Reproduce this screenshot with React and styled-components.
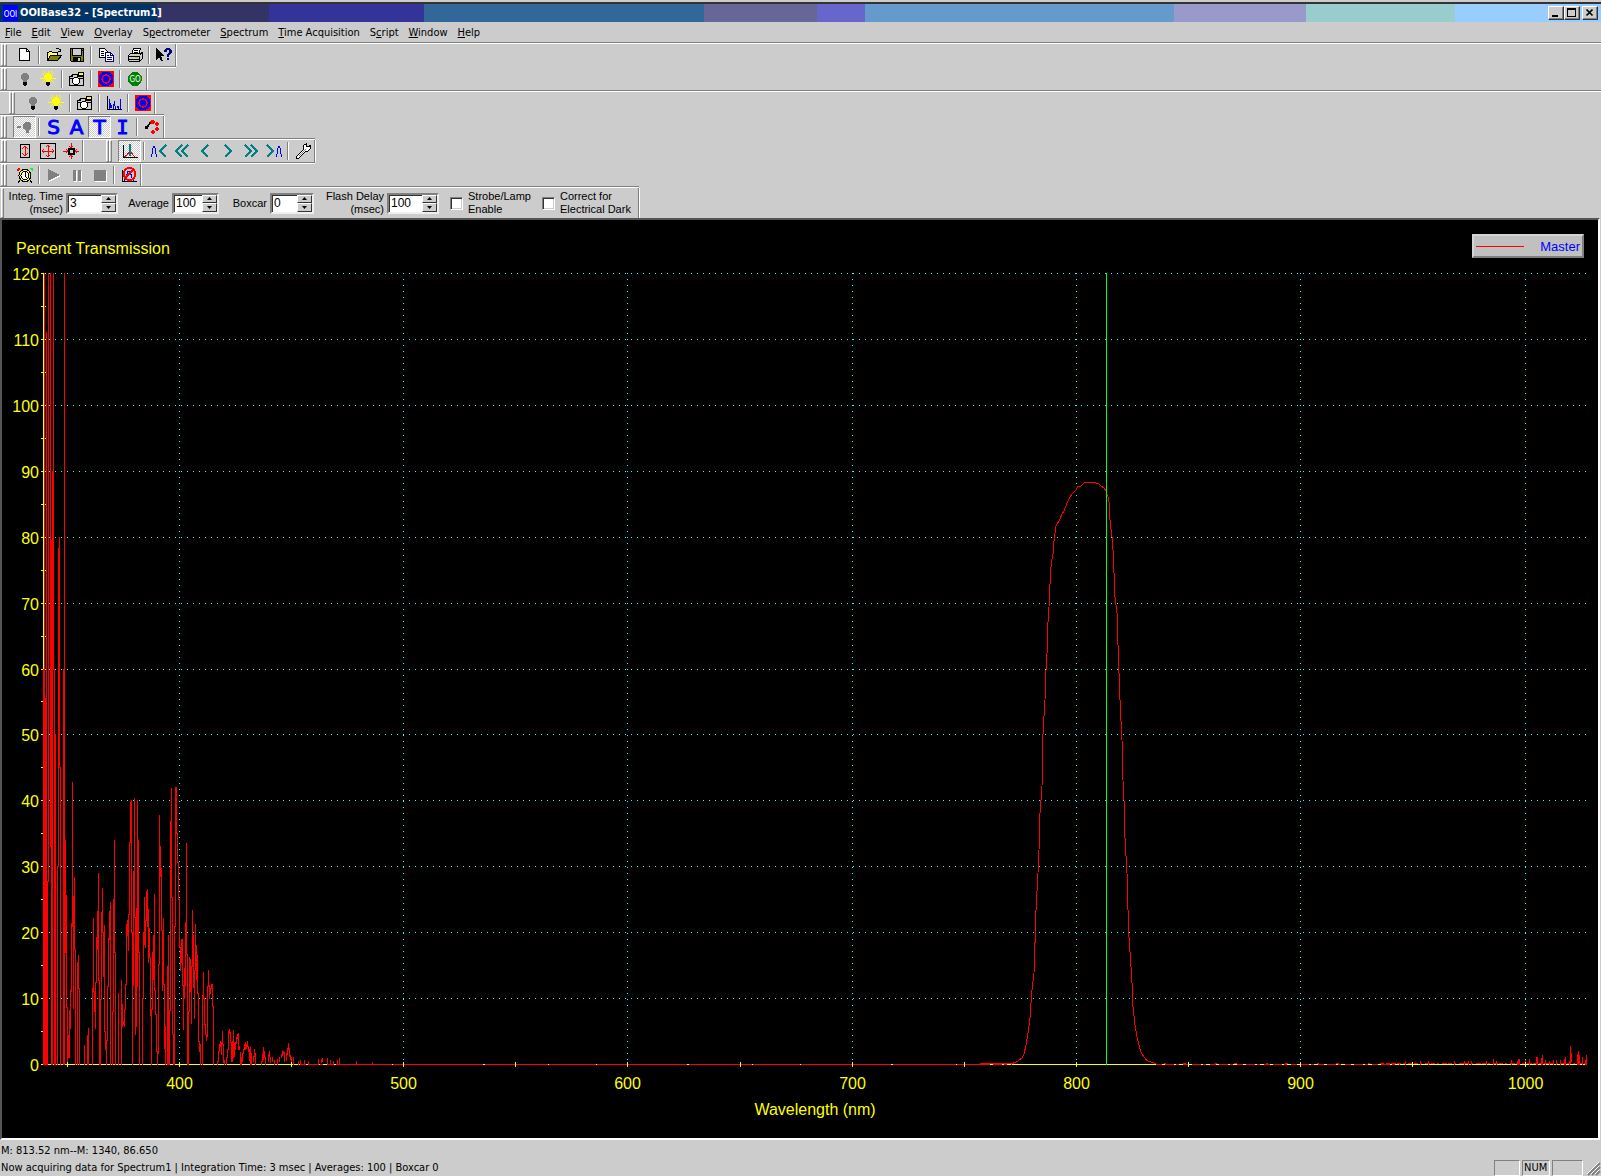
import React from "react";
import styled, { createGlobalStyle, css } from "styled-components";

const GlobalStyle = createGlobalStyle`
  *,
  *::before,
  *::after {
    box-sizing: border-box;
  }
  body {
    margin: 0;
    background: #ccc;
  }
  button, input {
    font: inherit;
    color: inherit;
    border-radius: 0;
  }
`;

const Window = styled.div`
  min-height: 100vh;
  display: flex;
  flex-direction: column;
  padding-top: 2px;
  background: #ccc;
  color: #000;
  font-family: "DejaVu Sans Condensed", "DejaVu Sans", sans-serif;
  font-size: 11px;
  line-height: 14px;
`;

const TitleBar = styled.header`
  display: flex;
  align-items: center;
  height: 20px;
  padding: 0 3px;
  border-top: 2px solid #333;
  background: linear-gradient(
    90deg,
    #036 0 9.8%,
    #336 0 16.8%,
    #339 0 26.5%,
    #369 0 44%,
    #669 0 51%,
    #66c 0 54%,
    #69c 0 73.3%,
    #99c 0 81.6%,
    #9cc 0 90.9%,
    #9cf 0
  );
`;

const Title = styled.h1`
  flex: 1;
  margin: 0 0 0 2px;
  color: #fff;
  font-size: 11px;
  line-height: 14px;
`;

const raised = css`
  border: 1px solid;
  border-color: #fff #333 #333 #fff;
  background: #ccc;
`;

const sunken = css`
  border: 1px solid;
  border-color: #808080 #fff #fff #808080;
`;

const CaptionButton = styled.button`
  ${raised}
  width: 16px;
  height: 14px;
  padding: 0;
  margin-left: ${(props) => (props.$apart ? "2px" : "0")};
  box-shadow: inset -1px -1px #808080;
  svg {
    display: block;
  }
`;

const MenuBar = styled.nav`
  display: flex;
  align-items: center;
  gap: 10px;
  height: 20px;
  padding: 1px 0 0 5px;
`;

const MenuButton = styled.button`
  padding: 0;
  border: 0;
  background: none;
`;

const Dock = styled.div`
  display: flex;
  flex-direction: column;
  gap: 2px;
  padding-top: 1px;
  border-top: 1px solid #808080;
  box-shadow: inset 0 1px #fff;
`;

const DockRow = styled.div`
  display: flex;
`;

const Toolbar = styled.div`
  display: flex;
  align-items: center;
  height: ${(props) => (props.$tall ? "30px" : "22px")};
  padding-left: ${(props) => props.$indent || 0}px;
  border-right: 1px solid #808080;
  box-shadow: 1px 0 #fff, 0 1px #808080, 0 2px #fff, 0 -1px #fff, 0 -2px #808080;
`;

const Grip = styled.span`
  align-self: stretch;
  display: flex;
  margin: 0 ${(props) => (props.$single ? 3 : 6)}px 0 1px;
  &::before,
  &::after {
    content: "";
    width: 3px;
    border: 1px solid;
    border-color: #fff #808080 #808080 #fff;
  }
  &::after {
    display: ${(props) => (props.$single ? "none" : "block")};
  }
`;

const Separator = styled.span`
  width: 6px;
  height: 18px;
  display: flex;
  justify-content: center;
  &::before {
    content: "";
    width: 2px;
    border-left: 1px solid #808080;
    border-right: 1px solid #fff;
  }
`;

const ToolButton = styled.button`
  display: flex;
  align-items: center;
  justify-content: center;
  width: 23px;
  height: 22px;
  padding: 0;
  border: 1px solid transparent;
  background: none;
  ${(props) =>
    props.$pressed &&
    css`
      border-color: #808080 #fff #fff #808080;
      background: repeating-conic-gradient(#fff 0 25%, #ccc 0 50%) 0 0 / 2px 2px;
    `}
`;

const Letter = styled.span`
  color: #00f;
  font-family: ${(props) => (props.$serif ? '"DejaVu Sans Mono"' : '"DejaVu Sans"')}, sans-serif;
  font-size: 20px;
  line-height: 20px;
  -webkit-text-stroke: 1px #00f;
`;

const Settings = styled.form`
  display: flex;
  align-items: center;
  padding-right: 3px;
  font-family: "Liberation Sans", Arial, sans-serif;
  font-size: 11px;
  line-height: 13px;
  white-space: nowrap;
`;

const SettingLabel = styled.label`
  width: ${(props) => props.$width}px;
  text-align: right;
`;

const SpinBox = styled.span`
  display: flex;
  width: ${(props) => props.$width}px;
  height: 21px;
  margin: 0 4px 0 3px;
  border: 2px solid;
  border-color: #808080 #eee #eee #808080;
  background: #fff;
  box-shadow: inset 1px 1px #333;
`;

const SpinInput = styled.input`
  flex: 1;
  min-width: 0;
  padding: 0 0 0 2px;
  border: 0;
  background: none;
  font-size: 12px;
  outline: 0;
`;

const SpinButtons = styled.span`
  display: flex;
  flex-direction: column;
  width: 15px;
`;

const SpinButton = styled.button`
  ${raised}
  flex: 1;
  display: flex;
  align-items: center;
  justify-content: center;
  padding: 0;
`;

const CheckLabel = styled.label`
  display: flex;
  align-items: center;
  gap: 5px;
  margin: 0 4px 0 7px;
`;

const CheckBox = styled.input`
  appearance: none;
  width: 13px;
  height: 13px;
  margin: 0;
  border: 1px solid;
  border-color: #808080 #fff #fff #808080;
  background: #fff;
  box-shadow: inset 1px 1px #333, inset -1px -1px #ccc;
`;

const ChartFrame = styled.main`
  position: relative;
  margin-right: 1px;
  border: 2px solid;
  border-color: #555 #fff #fff #555;
  background: #000;
`;

const Chart = styled.svg`
  display: block;
  width: 100%;
  height: auto;
  font-family: "Liberation Sans", Arial, sans-serif;
  font-size: 16px;
`;

const Legend = styled.div`
  position: absolute;
  top: 14px;
  right: 14px;
  display: flex;
  align-items: center;
  gap: 16px;
  height: 24px;
  padding: 1px 2px 0;
  border: 2px solid;
  border-color: #d4d4d4 #808080 #808080 #d4d4d4;
  background: #c0c0c0;
  color: #00f;
  font-family: "Liberation Sans", Arial, sans-serif;
  font-size: 13px;
  &::before {
    content: "";
    width: 48px;
    height: 1px;
    background: #f00;
  }
`;

const StatusArea = styled.footer`
  display: flex;
  flex-direction: column;
  justify-content: space-between;
  height: 36px;
  padding-top: 3px;
`;

const StatusLine = styled.div`
  display: flex;
  align-items: center;
  height: 16px;
  padding-left: 1px;
  gap: 2px;
`;

const StatusText = styled.span`
  flex: 1;
`;

const Pane = styled.span`
  ${sunken}
  width: ${(props) => props.$width}px;
  height: 16px;
  padding-left: 1px;
`;

const Icon = ({ children, size = 16 }) => (
  <svg width={size} height={size} viewBox="0 0 16 16" fill="none" shapeRendering="crispEdges" aria-hidden="true">
    {children}
  </svg>
);

const BulbShape = ({ color }) => (
  <>
    <path d="M6 2h4v1h1v1h1v4h-1v1h-1v2H6V9H5V8H4V4h1V3h1z" fill={color} />
    <path d="M6 11h4v3H9v1H7v-1H6z" fill="#000" />
  </>
);

const TargetShape = () => (
  <>
    <path d="M0 0h16v16H0z" fill="#f00" />
    <circle cx="8" cy="8" r="7.5" fill="#00f" />
    <circle cx="8" cy="8" r="4" stroke="#f00" strokeWidth="1.5" />
  </>
);

const icons = {
  new: (
    <>
      <path d="M2.500 1.500h7l3 3v9h-10z" fill="#fff" stroke="#000" />
      <path d="M9.500 1.500v3h3" stroke="#000" />
    </>
  ),
  open: (
    <>
      <path d="M1.500 12.500v-7h1l1-1h2l1 1h5v3" fill="#ff6" stroke="#000" />
      <path d="M1.500 13.500l3-5h11l-4 5z" fill="#808000" stroke="#000" />
      <path d="M9.500 2.500l1-1h2l2 2m0-2v3h-3" stroke="#000" />
    </>
  ),
  save: (
    <>
      <path d="M1.500 1.500h13v13h-12l-1-1z" fill="#808000" stroke="#000" />
      <path d="M4 2h8v6H4z" fill="#ccc" />
      <path d="M3.500 2v6.500h9V2M13 3h1" stroke="#000" />
      <path d="M4 10h8v4H4z" fill="#000" />
      <path d="M9 11h2v3H9z" fill="#ccc" />
    </>
  ),
  copy: (
    <>
      <path d="M1.500 1.500h5l3 3v6h-8z" fill="#fff" stroke="#000" />
      <path d="M3 4.500h3M3 6.500h3M3 8.500h3" stroke="#000" />
      <path d="M7.500 5.500h5l3 3v6h-8z" fill="#fff" stroke="#000080" />
      <path d="M12.500 5.500v3h3M9 8.500h2M9 10.500h5M9 12.500h5" stroke="#000080" />
    </>
  ),
  print: (
    <>
      <path d="M4.500 7.500l2-6h7l-2 6z" fill="#fff" stroke="#000" />
      <path d="M7 3.500h4M7 5.500h4" stroke="#000" />
      <path d="M1.500 8.500l2-2h10l2-1v6l-3 3h-10l-1-1z" fill="#ccc" stroke="#000" />
      <path d="M1 9.500h11M2 12.500h10M12.500 9v5M13 8l2-2" stroke="#000" />
      <path d="M8 10.500h3" stroke="#cc0" />
    </>
  ),
  help: (
    <>
      <path d="M0 1l8 8H5l2 5H5L3 10l-3 3z" fill="#000" />
      <path d="M8 5V3h1V2h1V1h4v1h1v1h1v3h-1v1h-1v1h-1v2h-2V7h1V6h1V3h-2v2zm3 6h2v2h-2z" fill="#000080" />
    </>
  ),
  bulbOff: <BulbShape color="#808080" />,
  bulbOn: (
    <>
      <path d="M8 0v2M2 2l2 2M14 2l-2 2M0 7h4M12 7h4M2 12l3-3M14 12l-3-3M4 0l1 2M12 0l-1 2" stroke="#ff0" strokeWidth="1" />
      <BulbShape color="#ff0" />
    </>
  ),
  camera: (
    <>
      <path d="M0.500 5.500h3v-2h5v2h6v9h-14z" fill="#ccc" stroke="#000" />
      <path d="M1 7.500h13M2.500 4v1M10.500 3v2" stroke="#000" />
      <path d="M9 1h5v3H9z" fill="#ff0" stroke="#000" />
      <circle cx="7" cy="10" r="3.500" fill="#fff" stroke="#000" />
    </>
  ),
  target: <TargetShape />,
  go: (
    <>
      <circle cx="8" cy="8" r="7" fill="#008000" />
      <text x="8" y="11" fill="#fff" fontSize="8" textAnchor="middle" fontFamily="DejaVu Sans Condensed, sans-serif">GO</text>
    </>
  ),
  graph: (
    <>
      <path d="M1.500 1v13M1 14.500h15" stroke="#000" />
      <path d="M3.500 14V4M4.500 8v5M5.500 13v-3M7.500 14V9M8.500 6v5M9.500 11v3M11.500 13v-2M12.500 11v3M14.500 4v10" stroke="#00f" />
    </>
  ),
  lamp: (
    <path d="M0 7h4v2H0zM6 5h1V4h1V3h5v1h1v6h-1v1h-1v3H9v-3H8v-1H6z" fill="#808080" />
  ),
  dots: (
    <>
      <path d="M3 8l4-5" stroke="#000" strokeWidth="2" />
      <path d="M1 7h3v3H1z" fill="#000" />
      <path d="M7 1h3v1h1v2h-1v1H7V4H6V2h1zM12 3h2v1h1v2h-1v1h-2V6h-1V4h1zM12 8h2v1h1v2h-1v1h-2v-1h-1V9h1zM8 11h2v1h1v2h-1v1H8v-1H7v-2h1z" fill="#f00" />
    </>
  ),
  zoomY: (
    <>
      <path d="M3.500 1.500h9v13h-9z" stroke="#000" />
      <path d="M8 3v10M5 6l3-3 3 3M5 10l3 3 3-3" stroke="#f00" />
    </>
  ),
  zoomXY: (
    <>
      <path d="M.5.500h15v15H.5z" stroke="#000" />
      <path d="M8 2v12M2 8h12M6 4l2-2 2 2M6 12l2 2 2-2M4 6L2 8l2 2M12 6l2 2-2 2" stroke="#f00" />
    </>
  ),
  shrink: (
    <>
      <path d="M6 6h5v5H6z" stroke="#000" strokeWidth="1.500" />
      <path d="M8 0v5M8 12v4M0 8h5M12 8h4M6 3l2 2 2-2M6 14l2-2 2 2M3 6l2 2-2 2M14 6l-2 2 2 2" stroke="#f00" />
    </>
  ),
  cursor: (
    <>
      <path d="M1.500 2v12M1 14.500h15" stroke="#000" />
      <path d="M2 14l3-2 2-3h2l2 3 2 2" stroke="#f00" />
      <path d="M8 1v12" stroke="#008080" strokeWidth="2" />
    </>
  ),
  peakLeft: (
    <>
      <path d="M0.500 14v-2l1-2V7l1-4h1l1 4v3l1 2v2" stroke="#00f" />
      <path d="M15 2L9 8l6 6" stroke="#008080" strokeWidth="1.500" />
    </>
  ),
  fastLeft: <path d="M8 2L2 8l6 6M14 2L8 8l6 6" stroke="#008080" strokeWidth="1.500" />,
  left: <path d="M11 2L5 8l6 6" stroke="#008080" strokeWidth="1.500" />,
  right: <path d="M5 2l6 6-6 6" stroke="#008080" strokeWidth="1.500" />,
  fastRight: <path d="M2 2l6 6-6 6M8 2l6 6-6 6" stroke="#008080" strokeWidth="1.500" />,
  peakRight: (
    <>
      <path d="M1 2l6 6-6 6" stroke="#008080" strokeWidth="1.500" />
      <path d="M10.500 14v-2l1-2V7l1-4h1l1 4v3l1 2v2" stroke="#00f" />
    </>
  ),
  wrench: (
    <>
      <path d="M1.500 13.500l7-7v-4l3-2v3h2l2-1v3l-3 3h-2l-7 7h-2z" fill="#fff" stroke="#000" />
      <path d="M4 13l7-7" stroke="#808080" />
    </>
  ),
  clock: (
    <>
      <path d="M3 13l-2 3M13 13l2 3" stroke="#000" strokeWidth="1" />
      <circle cx="8" cy="8.500" r="6" fill="#ff0" stroke="#000" />
      <circle cx="8" cy="8.500" r="4" fill="#fff" stroke="#000" />
      <path d="M8 5v4l2 2" stroke="#000" />
      <path d="M0 4V2l1-1h2v1L1 4z" fill="#f00" />
      <path d="M16 4V2l-1-1h-2v1l2 2z" fill="#0f0" />
    </>
  ),
  play: (
    <>
      <path d="M3 3l12 6L3 15z" fill="#fff" />
      <path d="M2 2l12 6-12 6z" fill="#808080" />
    </>
  ),
  pause: (
    <>
      <path d="M5 4h3v11H5zM10 4h3v11h-3z" fill="#fff" />
      <path d="M4 3h3v11H4zM9 3h3v11H9z" fill="#808080" />
    </>
  ),
  stop: (
    <>
      <path d="M3 4h12v11H3z" fill="#fff" />
      <path d="M2 3h12v11H2z" fill="#808080" />
    </>
  ),
  noPeak: (
    <>
      <path d="M1.500 3v11M1 14.500h15" stroke="#000" />
      <path d="M3 14l2-3 2-7h2l2 7 2 3" stroke="#00f" />
      <circle cx="8.500" cy="7" r="6" stroke="#f00" strokeWidth="2" />
      <path d="M4 11l9-9" stroke="#f00" strokeWidth="1.500" />
    </>
  ),
};

const menus = [
  ["", "F", "ile"],
  ["", "E", "dit"],
  ["", "V", "iew"],
  ["", "O", "verlay"],
  ["S", "p", "ectrometer"],
  ["", "S", "pectrum"],
  ["", "T", "ime Acquisition"],
  ["S", "c", "ript"],
  ["", "W", "indow"],
  ["", "H", "elp"],
];

// "|" is a separator between two groups of buttons
const fileTools = ["new", "|", "open", "save", "|", "copy", "|", "print", "|", "help"];
const lampTools = ["bulbOff", "bulbOn", "|", "camera", "|", "target", "|", "go"];
const scanTools = ["bulbOff", "bulbOn", "|", "camera", "|", "graph", "|", "target"];
const modeTools = ["lamp", "|", "S", "A", "T", "I", "|", "dots"];
const scaleTools = ["zoomY", "zoomXY", "shrink"];
const cursorTools = [
  "cursor", "|", "peakLeft", "fastLeft", "left", "right", "fastRight", "peakRight", "|", "wrench",
];
const timeTools = ["clock", "|", "play", "pause", "stop", "|", "noPeak"];

const Tools = ({ items, pressed = [] }) =>
  items.map((name, i) =>
    name === "|" ? (
      <Separator key={i} />
    ) : (
      <ToolButton key={i} type="button" aria-label={name} $pressed={pressed.includes(name)}>
        {icons[name] ? <Icon>{icons[name]}</Icon> : <Letter $serif={name === "I"}>{name}</Letter>}
      </ToolButton>
    )
  );

const Spin = ({ id, value, width }) => (
  <SpinBox $width={width}>
    <SpinInput id={id} defaultValue={value} />
    <SpinButtons>
      <SpinButton type="button" aria-label="Increase">
        <svg width="5" height="3" viewBox="0 0 5 3"><path d="M0 3l2.500-3L5 3z" /></svg>
      </SpinButton>
      <SpinButton type="button" aria-label="Decrease">
        <svg width="5" height="3" viewBox="0 0 5 3"><path d="M0 0l2.500 3L5 0z" /></svg>
      </SpinButton>
    </SpinButtons>
  </SpinBox>
);

const LEFT = 43;
const RIGHT = 1587;
const TOP = 273;
const BOTTOM = 1064;
const xOf = (nm) => Math.floor(179.3 + (nm - 400) * 2.243) + 0.5;
const yOf = (pct) => Math.round(BOTTOM - (pct * (BOTTOM - TOP)) / 120) + 0.5;

// column, lowest and highest transmission in percent
const noise = [
  [43, 0, 60], [44, 0, 120], [45, 0, 55.5], [46, 0, 111], [48, 27.7, 120], [47, 0, 27.7], [50, 33, 120],
  [51, 0, 79.5], [52, 0, 90], [53, 60, 120], [54, 0, 60], [55, 0, 50], [57, 0, 30], [58, 30, 78.3],
  [59, 45, 80], [60, 0, 45], [63, 0, 60], [64, 0, 120], [65, 17, 34], [66, 8.7, 25.7], [67, 0, 8.7],
  [68, 1, 4.4], [69, 1, 8.2], [70, 5.5, 11.3], [71, 11, 21.4], [72, 21, 42.8], [73, 8.5, 25.5],
  [74, 17.5, 28.3], [75, 0, 17.5], [77, 0, 15.4], [78, 11.5, 16.6], [79, 0, 11.6], [84, 0, 2.9],
  [87, 0, 4.4], [88, 0, 5.5], [92, 0, 11.6], [93, 11, 22.2], [94, 8, 11], [95, 5.5, 12.5],
  [96, 12.5, 19.3], [97, 17.5, 23.2], [98, 12.8, 29], [99, 0, 12.8], [100, 0, 9.8], [101, 9.8, 23],
  [102, 20, 26.7], [103, 13.4, 20], [104, 5, 21.1], [105, 2.3, 5], [106, 0, 3.7], [107, 3.7, 11.9],
  [108, 11.9, 19.1], [109, 19, 23.2], [110, 0, 24.6], [112, 0, 8.1], [113, 8, 25], [114, 17, 34],
  [115, 0, 17], [118, 0, 10.8], [121, 0, 12.8], [122, 5.7, 9.1], [123, 6, 6.5], [124, 5.8, 8.3],
  [125, 8.3, 12.2], [126, 12.2, 21.3], [127, 19.5, 21.9], [128, 17.3, 22.7], [129, 22.7, 33.7],
  [130, 33.7, 39.8], [131, 20, 40], [132, 0, 20], [133, 12, 29.3], [134, 22.3, 40.4], [135, 4.5, 22.3],
  [136, 5.8, 23.6], [137, 11.8, 40], [138, 17, 34], [139, 0, 17], [142, 0, 10], [143, 10, 20],
  [144, 18.2, 25.4], [145, 17.7, 21.9], [146, 21.9, 26.3], [147, 21, 26.6], [148, 15.4, 23.5],
  [149, 16.3, 20.6], [150, 7.4, 16.3], [151, 0, 8.3], [152, 8.3, 17], [153, 12.9, 19.5],
  [154, 11.3, 25.8], [155, 7.6, 11.3], [156, 2, 7.6], [157, 0, 2], [158, 1.7, 15.2], [159, 15.2, 37.8],
  [160, 28.5, 33.1], [161, 20.4, 29.8], [162, 11.2, 20.4], [163, 12.2, 22.1], [164, 2.5, 12.2],
  [165, 0, 5.8], [167, 0, 14.9], [168, 0, 19.5], [169, 0, 8.2], [170, 8.2, 36.8], [171, 25.4, 41.9],
  [172, 4.5, 25.4], [173, 0, 4.5], [174, 0, 21], [175, 21, 42], [176, 35, 42], [177, 30.7, 35],
  [178, 25, 30.7], [179, 17.8, 25], [180, 14.2, 17.8], [181, 15.5, 18.9], [182, 12, 18.9],
  [183, 5.3, 12], [184, 10, 14.5], [185, 12, 21.6], [186, 16.7, 33.6], [187, 0, 16.7], [188, 0, 8],
  [189, 8, 16.3], [190, 11, 16], [191, 6.2, 14.8], [192, 14.8, 23.4], [193, 11.7, 19.5], [194, 7, 14.2],
  [195, 14.2, 21.3], [196, 12.9, 18], [197, 10.7, 16.6], [198, 3.5, 10.7], [199, 2, 3.5], [200, 0, 3],
  [202, 0, 10.5], [203, 10, 14], [204, 6, 10], [205, 4.5, 6], [206, 3.6, 4.6], [207, 4.3, 11.9],
  [208, 11.8, 14.2], [209, 10, 12], [210, 10.8, 11.6], [211, 11.6, 12.2], [212, 8.8, 12.2], [213, 0, 8.8],
  [217, 0, 0.5], [218, 0.5, 2], [219, 2, 3], [220, 2.7, 3.5], [221, 1.5, 3.3], [222, 3, 5],
  [223, 0.3, 3], [224, 0, 0.6], [226, 0, 1], [227, 1, 2.2], [228, 2.2, 5], [229, 4.7, 5.3],
  [230, 3.4, 4.8], [231, 0.5, 3.4], [232, 0.5, 3.5], [233, 1, 5.2], [234, 1.2, 3.2], [235, 2.3, 3.4],
  [236, 3.2, 4.1], [237, 4, 4.6], [238, 2.2, 4.7], [239, 2.2, 2.8], [240, 0, 1.8], [241, 0, 1],
  [242, 0.5, 1.7], [243, 1.7, 2.3], [244, 2.2, 3.1], [245, 2.2, 3.4], [246, 2.4, 3.1], [247, 2.8, 3.5],
  [248, 1.9, 2.8], [249, 0.6, 2.2], [250, 0, 2.6], [251, 0, 1.6], [253, 0.4, 1.2], [254, 1.2, 2.2],
  [255, 0, 1.7], [261, 0, 0.4], [262, 0.4, 1.5], [263, 0.8, 2.6], [264, 1, 2], [265, 0, 1],
  [268, 0.4, 1.5], [269, 1.2, 2], [270, 0.3, 1], [272, 0.4, 1], [274, 0, 0.6], [277, 0, 0.8],
  [279, 0.4, 1], [281, 1, 1.5], [282, 1.4, 2], [283, 1.6, 2], [284, 0.5, 1.8], [286, 0.6, 1.6],
  [287, 1.5, 2.5], [288, 2.2, 3.2], [289, 1.2, 2.5], [290, 0.8, 1.3], [291, 0.3, 1], [293, 0, 1],
  [298, 0, 0.5], [300, 0, 0.6], [304, 0, 0.6], [308, 0, 0.4], [318, 0, 0.8], [321, 0.3, 0.7],
  [322, 0.5, 0.9], [327, 0, 0.9], [330, 0, 0.6], [333, 0, 0.4], [337, 0, 0.6], [339, 0, 0.9],
  [356, 0, 0.4], [372, 0, 0.3], [1405, 0, 0.4], [1420, 0, 0.4], [1428, 0, 0.4], [1454, 0, 0.4],
  [1464, 0, 0.5], [1468, 0, 0.5], [1471, 0, 0.4], [1486, 0, 0.5], [1493, 0, 0.7], [1496, 0, 0.5],
  [1511, 0, 0.6], [1517, 0, 0.5], [1518, 0, 0.8], [1519, 0, 0.8], [1525, 0, 0.6], [1529, 0, 0.8],
  [1536, 0, 1], [1537, 0, 1], [1541, 0, 0.9], [1542, 0, 1.3], [1545, 0, 0.6], [1549, 0, 0.5],
  [1553, 0, 0.6], [1556, 0, 0.6], [1560, 0, 0.6], [1564, 0, 0.8], [1565, 0, 1], [1569, 0, 0.4],
  [1570, 0.3, 2.8], [1571, 0.4, 1.6], [1577, 0, 1.5], [1578, 0, 1.9], [1579, 0, 1.3], [1582, 0, 1],
  [1585, 0, 0.6], [1586, 0, 1.3],
];

const band =
  "980,1064 1012,1063.500 1015,1062.500 1018,1061 1022,1058 1024,1054 1026,1045 1028,1033 1029,1026 1030,1018 1031,1003 " +
  "1032,990 1034,973 1035,943 1036,910 1038,873 1039,850 1040,813 1042,787 1042.500,743 1043.500,725 1045,700 " +
  "1046,670 1047,653 1048,622 1049,607 1050.500,573 1051.500,562 1053,554 1054,541 1055,533 1056,526 1059,521 " +
  "1060,519 1062,514 1064,511 1067,503 1070,497 1073,493 1076,490 1078,486.500 1081,486 1084,483 1087,482 " +
  "1089,483 1091,482 1093,483 1094,482 1096,483 1099,484 1101,486 1104,488 1106,491 1108,497 1109,502 " +
  "1110,520 1112,537 1113,550 1114,573 1115,597 1117,613 1118,645 1119,673 1120,700 1121,721 1122,740 " +
  "1122.500,770 1124,800 1125,838 1127,873 1128,910 1129,937 1131,967 1132,983 1133,1007 1135,1025 " +
  "1137,1037 1139,1045 1141,1052 1144,1057 1147,1060.500 1152,1062.500 1156,1063.500";

const noisePath = noise
  .map(([x, low, high]) => `M${x + 0.5} ${yOf(low)}V${yOf(high) - 0.5}`)
  .join("");

const percents = Array.from({ length: 13 }, (_, i) => i * 10);
const wavelengths = [400, 500, 600, 700, 800, 900, 1000];
const halfSteps = [350, 450, 550, 650, 750, 850, 950];

const SpectrumChart = () => (
  <Chart viewBox="2 220 1596 918" role="img" aria-label="Percent Transmission">
    <g shapeRendering="crispEdges" fill="none">
      <g stroke="#3ff" strokeDasharray="1 5">
        {percents.slice(1).map((p) => (
          <path key={p} d={`M${LEFT} ${yOf(p)}H${RIGHT}`} />
        ))}
        {wavelengths.map((nm) => (
          <path key={nm} d={`M${xOf(nm)} ${TOP}V${BOTTOM}`} />
        ))}
      </g>
      <g stroke="#ff0">
        <path d={`M${LEFT + 0.5} ${TOP}V${BOTTOM}M${LEFT} ${BOTTOM + 0.5}H${RIGHT}`} />
        {percents.map((p) => (
          <path key={p} d={`M41 ${yOf(p)}h5${p < 120 ? `M41 ${yOf(p + 5)}h5` : ""}`} />
        ))}
      </g>
      <g stroke="#f00">
        <path d={noisePath} />
        <path d="M345 1064.500H984" strokeDasharray="47 1 90 2 63 1" />
        <path d="M300 1064.500H345M984 1064.500H1012M1156 1064.500H1400" strokeDasharray="6 3 9 2 3 4" />
        <path d="M1164 1063.500H1400" strokeDasharray="2 17 3 29" />
        <path d="M1380 1063.500H1586" strokeDasharray="4 2 2 3 5 1" />
        <polyline points={band} />
      </g>
      <g stroke="#ff0">
        {[...wavelengths, ...halfSteps].map((nm) => (
          <path key={nm} d={`M${xOf(nm)} 1062v5`} />
        ))}
      </g>
      <path d={`M1106.500 ${TOP}V${BOTTOM + 1}`} stroke="#0f0" />
    </g>
    <g fill="#ff0">
      <text x="16" y="254">Percent Transmission</text>
      {percents.map((p) => (
        <text key={p} x="39" y={Math.round(yOf(p)) + 6} textAnchor="end">{p}</text>
      ))}
      {wavelengths.map((nm) => (
        <text key={nm} x={xOf(nm)} y="1089" textAnchor="middle">{nm}</text>
      ))}
      <text x="815" y="1115" textAnchor="middle">Wavelength (nm)</text>
    </g>
  </Chart>
);

export default function App() {
  return (
    <Window>
      <GlobalStyle />
      <TitleBar>
        <svg width="15" height="16" viewBox="0 0 15 16" aria-hidden="true">
          <path d="M0 0h15v16H0z" fill="#00f" />
          <text x="7.500" y="12" fill="#fff" fontSize="8" textAnchor="middle" fontFamily="DejaVu Sans Condensed, sans-serif">OOI</text>
        </svg>
        <Title>OOIBase32 - [Spectrum1]</Title>
        <CaptionButton aria-label="Minimize">
          <svg width="13" height="12" viewBox="0 0 13 12"><path d="M3 8h6v2H3z" /></svg>
        </CaptionButton>
        <CaptionButton aria-label="Maximize">
          <svg width="13" height="12" viewBox="0 0 13 12" fillRule="evenodd"><path d="M2 1h9v9H2zM3 3v6h7V3z" /></svg>
        </CaptionButton>
        <CaptionButton aria-label="Close" $apart>
          <svg width="13" height="12" viewBox="0 0 13 12" fill="none"><path d="M3.500 2.500l6 6m0-6l-6 6" stroke="#000" strokeWidth="1.700" /></svg>
        </CaptionButton>
      </TitleBar>
      <MenuBar>
        {menus.map(([before, key, after]) => (
          <MenuButton key={key + after} type="button">
            {before}
            <u>{key}</u>
            {after}
          </MenuButton>
        ))}
      </MenuBar>

      <Dock>
        <DockRow>
          <Toolbar>
            <Grip />
            <Tools items={fileTools} />
          </Toolbar>
        </DockRow>
        <DockRow>
          <Toolbar>
            <Grip />
            <Tools items={lampTools} />
          </Toolbar>
        </DockRow>
      </Dock>
      <Dock>
        <DockRow>
          <Toolbar $indent={8}>
            <Grip />
            <Tools items={scanTools} />
          </Toolbar>
        </DockRow>
        <DockRow>
          <Toolbar>
            <Grip />
            <Tools items={modeTools} pressed={["lamp", "T"]} />
          </Toolbar>
        </DockRow>
        <DockRow>
          <Toolbar>
            <Grip />
            <Tools items={scaleTools} />
          </Toolbar>
          <Toolbar $indent={22}>
            <Grip />
            <Tools items={cursorTools} pressed={["cursor"]} />
          </Toolbar>
        </DockRow>
        <DockRow>
          <Toolbar>
            <Grip />
            <Tools items={timeTools} />
          </Toolbar>
        </DockRow>
        <DockRow>
          <Toolbar $tall>
            <Grip $single />
            <Settings>
              <SettingLabel htmlFor="integ" $width={56}>Integ. Time<br />(msec)</SettingLabel>
              <Spin id="integ" value="3" width={52} />
              <SettingLabel htmlFor="average" $width={47}>Average</SettingLabel>
              <Spin id="average" value="100" width={47} />
              <SettingLabel htmlFor="boxcar" $width={44}>Boxcar</SettingLabel>
              <Spin id="boxcar" value="0" width={44} />
              <SettingLabel htmlFor="flash" $width={66}>Flash Delay<br />(msec)</SettingLabel>
              <Spin id="flash" value="100" width={52} />
              <CheckLabel>
                <CheckBox type="checkbox" />
                <span>Strobe/Lamp<br />Enable</span>
              </CheckLabel>
              <CheckLabel>
                <CheckBox type="checkbox" />
                <span>Correct for<br />Electrical Dark</span>
              </CheckLabel>
            </Settings>
          </Toolbar>
        </DockRow>
      </Dock>

      <ChartFrame>
        <SpectrumChart />
        <Legend>Master</Legend>
      </ChartFrame>

      <StatusArea>
        <StatusLine>M: 813.52 nm--M: 1340, 86.650</StatusLine>
        <StatusLine>
          <StatusText>
            Now acquiring data for Spectrum1 | Integration Time: 3 msec | Averages: 100 | Boxcar 0
          </StatusText>
          <Pane $width={26} />
          <Pane $width={28}>NUM</Pane>
          <Pane $width={31} />
          <svg width="16" height="16" viewBox="0 0 16 16" aria-hidden="true">
            <path d="M3 15L15 3M7 15l8-8M11 15l4-4" stroke="#808080" strokeWidth="2" />
            <path d="M2 14L14 2M6 14l8-8M10 14l4-4" stroke="#fff" />
          </svg>
        </StatusLine>
      </StatusArea>
    </Window>
  );
}
